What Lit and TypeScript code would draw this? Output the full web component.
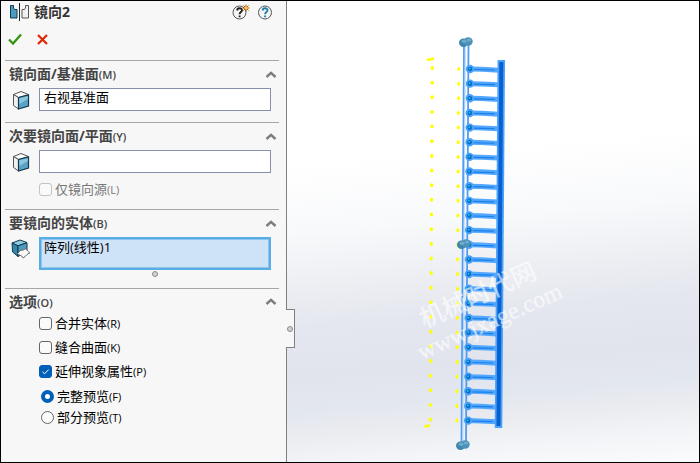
import { LitElement, html, svg, css } from "lit";
import { customElement } from "lit/decorators.js";

const RUNGS = Array.from({ length: 25 }, (_, i) => i);
const PITCH = 14.65;

const chevron = html`<svg class="chevron" viewBox="0 0 12 8" aria-hidden="true">
  <path d="M1.5 6 L6 1.800 L10.5 6" fill="none" stroke="#7d7d7d" stroke-width="2.4" />
</svg>`;

const cube = html`<svg class="icon" viewBox="0 0 18 20" aria-hidden="true">
  <path d="M1.5 4.5 L9 1.5 L16.5 4.5 L6.5 7.5 Z" fill="#fdfdfd" stroke="#555" />
  <path d="M1.5 4.5 L6.5 7.5 V19 L1.5 15.5 Z" fill="#f0f0f0" stroke="#555" />
  <path d="M6.5 7.5 L16.5 5 V16 L6.5 19 Z" fill="#5aa3c6" stroke="#14384c" stroke-width="1.2" />
  <path d="M7.300 8.300 L15.800 6.200 V9 L7.300 14 Z" fill="#8cc6e0" />
</svg>`;

const bodyIcon = html`<svg class="icon" viewBox="0 0 20 20" aria-hidden="true">
  <path d="M1 4 L9 1 L16 3.6 L7 6.8 Z" fill="#8fcbe2" stroke="#12394d" />
  <path d="M1 4 L7 6.8 V17.5 L1.6 13 Z" fill="#3586ab" stroke="#12394d" />
  <path d="M7 6.8 L16 3.8 V12 L7 17.5 Z" fill="#4c9cc0" stroke="#12394d" />
  <path d="M6.500 14.500 L10 11 C12 12 13.5 10 15 9.5 C16 12 17.5 12.5 18.8 14 C16.5 14 14.8 17.5 12.2 19 C11 16 8.500 17 6.500 14.500 Z" fill="#fafafa" stroke="#666" />
</svg>`;

@customElement("app-root")
export class AppRoot extends LitElement {
  static styles = css`
    :host {
      display: block;
      font-family: "Open Sans", "Noto Sans CJK SC", sans-serif;
      font-size: 13px;
      color: #000;
    }
    * { box-sizing: border-box; }
    .window {
      display: grid;
      grid-template-columns: 286px 1fr;
      min-height: 100vh;
      border: 1px solid #000;
      background: #f7f7f7;
    }
    .panel {
      padding: 0 7px 0 4px;
      border-right: 1px solid #808080;
    }
    button { padding: 0; border: 0; background: none; display: flex; }
    .title {
      display: flex;
      align-items: center;
      height: 22px;
      padding: 0 5px 0 4px;
    }
    h1 {
      flex: 1;
      margin: 0 0 0 5px;
      font-size: 14px;
      line-height: 20px;
      font-weight: 700;
      color: #333;
    }
    .title button + button { margin-left: 8px; }
    .mirror { width: 20px; height: 18px; }
    .help { width: 17px; height: 16px; overflow: visible; }
    .confirm {
      display: flex;
      align-items: center;
      gap: 14px;
      height: 37px;
      padding: 0 0 5px 3px;
    }
    .confirm svg { width: 14px; height: 13px; }
    section { border-top: 1px solid #a6a6a6; padding-bottom: 11px; }
    header {
      display: flex;
      align-items: center;
      justify-content: space-between;
      height: 27px;
      padding: 0 2px 0 4px;
    }
    h2 {
      margin: 0;
      font-size: 14px;
      line-height: 20px;
      font-weight: 700;
      color: #444;
    }
    small { font-size: 11px; font-weight: 400; }
    h2 small { font-weight: 600; }
    .chevron { width: 12px; height: 8px; }
    .pick {
      display: flex;
      align-items: flex-start;
      padding: 0 8px 0 6px;
    }
    .icon { width: 20px; height: 20px; margin-top: 2px; }
    .field {
      flex: 1;
      min-width: 0;
      height: 23px;
      margin: 0 0 0 8px;
      padding: 0 4px 6px;
      border: 1px solid #868fac;
      border-radius: 0;
      background: #fff;
      font: inherit;
      line-height: 16px;
      color: #000;
      outline: none;
    }
    .active {
      height: 33px;
      padding: 0 3px;
      border: 2px solid #58aee4;
      background: #cfe3f8;
      resize: none;
      overflow: hidden;
      box-shadow: inset 0 0 0 1px #8cc5ee;
    }
    .grip {
      width: 6px;
      height: 6px;
      border: 1px solid #8a8a8a;
      border-radius: 50%;
      background: #d2d2d2;
    }
    .resize {
      display: flex;
      justify-content: center;
      padding: 1px 8px 0 34px;
    }
    label {
      display: flex;
      align-items: center;
      gap: 3px;
      height: 24px;
      padding-left: 34px;
      line-height: 20px;
    }
    .secondary { padding-bottom: 8px; }
    .secondary label { margin-top: 4px; color: #777; }
    .options header { height: 22px; padding-top: 4px; }
    .preview { padding-top: 3px; }
    .preview label { height: 21px; padding-left: 36px; }
    input[type="checkbox"], input[type="radio"] {
      appearance: none;
      flex: none;
      width: 13px;
      height: 13px;
      margin: 0;
      border: 1px solid #666;
      border-radius: 3px;
      background: #fafafa;
    }
    input[type="checkbox"]:disabled { border-color: #c3c3c3; }
    input[type="checkbox"]:checked { border-color: #005fb8; background: #005fb8; }
    .tick { position: relative; display: flex; }
    .tick svg {
      position: absolute;
      inset: 0;
      width: 13px;
      height: 13px;
      pointer-events: none;
    }
    input[type="radio"] { border-radius: 50%; }
    input[type="radio"]:checked { border: 4px solid #005fb8; background: #fff; }
    .view {
      position: relative;
      min-width: 0;
      background: linear-gradient(175deg, #fff 33%, #f8f9fb 47%, #ecedf2 59%, #e4e7ef 66%, #e1e4ed 76%, #e3e7ef 83%, #ebecf0 88%, #f4f5f8 94%, #f9fafb 99%);
    }
    .scene { display: block; width: 100%; height: 100%; }
    .watermark {
      font-family: "Liberation Serif", "Noto Sans CJK SC", serif;
      fill: #fff;
      fill-opacity: 0.6;
    }
    .cn { font-size: 25px; font-weight: 500; }
    .url { font-size: 24px; stroke: #fff; stroke-opacity: 0.2; }
    .splitter {
      position: absolute;
      left: -1px;
      top: 308px;
      display: flex;
      align-items: center;
      justify-content: center;
      width: 9px;
      height: 39px;
      border: 1px solid #808080;
      border-left: 0;
      background: #f7f7f7;
    }
  `;

  private heading(text: string, key: string) {
    return html`<header>
      <h2>${text}<small>(${key})</small></h2>
      <button aria-label="折叠${text}">${chevron}</button>
    </header>`;
  }

  private rung(i: number) {
    const y = 68 + i * PITCH;
    const x = 183 - i * 0.08;
    const end = 212 - i * 0.1;
    return svg`
      <path d="M${x} ${y} L${x + 12} ${y + 0.3} L${end} ${y + 1.2}" fill="none" stroke="#55a8ff" stroke-width="5" />
      <path d="M${x + 4} ${y + 0.5} L${end - 4} ${y + 1}" stroke="#1a7fe6" stroke-width="1.2" />
      <circle cx=${x} cy=${y} r="4.200" fill="#4ba2fb" />
      <circle cx=${x} cy=${y} r="2.300" fill="#0769bd" />
      <circle cx=${x - 0.3} cy=${y - 0.4} r="1" fill="#12c8ee" />
      <ellipse cx=${171.7 - i * 0.08} cy=${y} rx="1.500" ry="2" fill="#ff0" />
      <ellipse cx=${145.3 - i * 0.08} cy=${y - 1} rx="1.700" ry="2" fill="#ff0" />`;
  }

  private knob(x: number, y: number) {
    return svg`<g transform="translate(${x} ${y})">
      <ellipse cx="-2.5" cy="0.800" rx="4.500" ry="4.200" fill="#3f86ae" />
      <ellipse cx="2.200" cy="-0.500" rx="4.500" ry="4.200" fill="#4b91b9" />
      <ellipse cx="-2" cy="-0.800" rx="2.500" ry="1.800" fill="#6faccb" />
      <ellipse cx="3" cy="-2" rx="2.200" ry="1.500" fill="#6faccb" />
    </g>`;
  }

  render() {
    return html`<div class="window">
      <aside class="panel">
        <div class="title">
          <svg class="mirror" viewBox="0 0 20 18" aria-hidden="true">
            <path d="M1.500 2.500 H4.500 V5 L5.500 6.500 H8 V15 H1.500 Z" fill="#4a9cc0" stroke="#173d50" />
            <path d="M10.500 0 V18" stroke="#222" />
            <path d="M19.500 2.500 H16.500 V5 L15.500 6.500 H13 V15 H19.500 Z" fill="#f1f1f1" stroke="#555" />
          </svg>
          <h1>镜向2</h1>
          <button aria-label="新增功能">
            <svg class="help" viewBox="0 0 17 16">
              <circle cx="7.500" cy="8.500" r="6.500" fill="#f5f5f5" stroke="#555" />
              <path d="M5.200 6.500 C5.200 3.500 10 3.500 10 6.300 C10 8 7.600 8.200 7.600 10.200 M7.600 11.500 V13.200" fill="none" stroke="#222" stroke-width="1.900" />
              <path d="M14 0.500 V7.500 M10.500 4 H17.500 M11.500 1.500 L16.500 6.500 M16.500 1.500 L11.500 6.500" stroke="#ac5000" />
              <circle cx="14" cy="4" r="1.600" fill="#ffc63c" />
            </svg>
          </button>
          <button aria-label="帮助">
            <svg class="help" viewBox="0 0 17 16">
              <circle cx="8" cy="8.500" r="6.500" fill="#f5f5f5" stroke="#555" />
              <path d="M5.700 6.500 C5.700 3.500 10.500 3.500 10.500 6.300 C10.500 8 8.100 8.200 8.100 10.200 M8.100 11.500 V13.200" fill="none" stroke="#227fa8" stroke-width="1.900" />
            </svg>
          </button>
        </div>
        <div class="confirm">
          <button aria-label="确定">
            <svg viewBox="0 0 14 13"><path d="M1 6.500 L5 10.500 L13 1.500" fill="none" stroke="#35930f" stroke-width="2.300" /></svg>
          </button>
          <button aria-label="取消">
            <svg viewBox="0 0 14 13"><path d="M2 2 L11 11 M11 2 L2 11" fill="none" stroke="#df2a05" stroke-width="2.300" /></svg>
          </button>
        </div>

        <section>
          ${this.heading("镜向面/基准面", "M")}
          <div class="pick">${cube}<input class="field" aria-label="镜向面/基准面" .value=${"右视基准面"} /></div>
        </section>

        <section class="secondary">
          ${this.heading("次要镜向面/平面", "Y")}
          <div class="pick">${cube}<input class="field" aria-label="次要镜向面/平面" /></div>
          <label><input type="checkbox" disabled /><span>仅镜向源<small>(L)</small></span></label>
        </section>

        <section>
          ${this.heading("要镜向的实体", "B")}
          <div class="pick">${bodyIcon}<textarea class="field active" aria-label="要镜向的实体" .value=${"阵列(线性)1"}></textarea></div>
          <div class="resize"><span class="grip"></span></div>
        </section>

        <section class="options">
          ${this.heading("选项", "O")}
          <label><input type="checkbox" /><span>合并实体<small>(R)</small></span></label>
          <label><input type="checkbox" /><span>缝合曲面<small>(K)</small></span></label>
          <label>
            <span class="tick">
              <input type="checkbox" checked />
              <svg viewBox="0 0 13 13"><path d="M3.500 6.800 L5.600 8.800 L9.600 4.600" fill="none" stroke="#fff" /></svg>
            </span>
            <span>延伸视象属性<small>(P)</small></span>
          </label>
          <div class="preview" role="radiogroup" aria-label="预览">
            <label><input type="radio" name="preview" checked /><span>完整预览<small>(F)</small></span></label>
            <label><input type="radio" name="preview" /><span>部分预览<small>(T)</small></span></label>
          </div>
        </section>
      </aside>

      <main class="view">
        <svg class="scene" viewBox="0 0 412 461" role="img" aria-label="镜向预览">
          <path d="M177 44 L174.500 442 M181.500 44 L179 442" stroke="#4f9cf2" stroke-width="1.800" />
          <path d="M178.300 44 L175.800 442" stroke="#b5d6fb" />
          ${RUNGS.map((i) => this.rung(i))}
          <path d="M214.300 59 L211.500 427" stroke="#4ba1fb" stroke-width="7.500" />
          <path d="M214.300 61 L211.500 425" stroke="#0762cf" stroke-width="4" />
          <path d="M140 59 L147 57.500" stroke="#ff0" stroke-width="2.500" />
          <path d="M137.500 425.500 L143 424.500" stroke="#ff0" stroke-width="2.500" />
          ${this.knob(179, 41)}
          ${this.knob(177, 243)}
          ${this.knob(176, 444)}
          <g class="watermark" transform="rotate(-24 140 324)">
            <text class="cn" x="136" y="326">机械时代网</text>
            <text class="url" x="121" y="354">www.jxage.com</text>
          </g>
        </svg>
        <div class="splitter"><span class="grip"></span></div>
      </main>
    </div>`;
  }
}
